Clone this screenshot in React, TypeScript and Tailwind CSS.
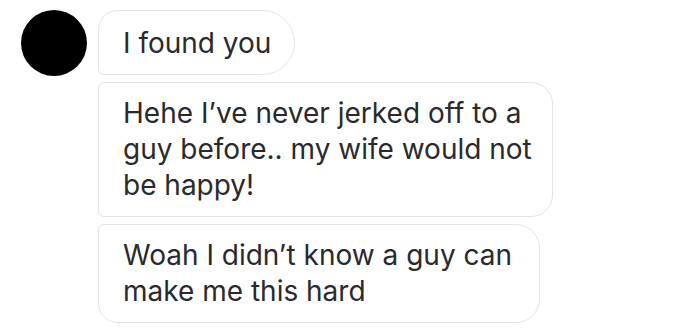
export default function App() {
  return (
    <div className="w-[680px] h-[329px] bg-white overflow-hidden font-['Inter',sans-serif] text-[#2a2a2e]">
      <div className="flex items-start gap-[11px] pl-[21px] pt-[10px]">
        <div className="w-[66px] h-[66px] rounded-full bg-black shrink-0" />
        <div className="flex flex-col gap-[7px]">
          <div className="w-[197px] h-[65px] flex items-center px-[24px] border-[1.5px] border-[#e4e4e8] rounded-tl-[20px] rounded-bl-[6px] rounded-r-[33px] text-[28px] leading-[36px] whitespace-nowrap">
            I found you
          </div>
          <div className="w-[455px] h-[135px] px-[24px] py-[12px] border-[1.5px] border-[#e4e4e8] rounded-l-[6px] rounded-r-[22px] text-[28px] leading-[36px] whitespace-nowrap">
            Hehe I’ve never jerked off to a
            <br />
            guy before.. my wife would not
            <br />
            be happy!
          </div>
          <div className="w-[442px] h-[99px] px-[24px] py-[12px] border-[1.5px] border-[#e4e4e8] rounded-tl-[6px] rounded-bl-[20px] rounded-r-[24px] text-[28px] leading-[36px] whitespace-nowrap">
            Woah I didn’t know a guy can
            <br />
            make me this hard
          </div>
        </div>
      </div>
    </div>
  )
}
